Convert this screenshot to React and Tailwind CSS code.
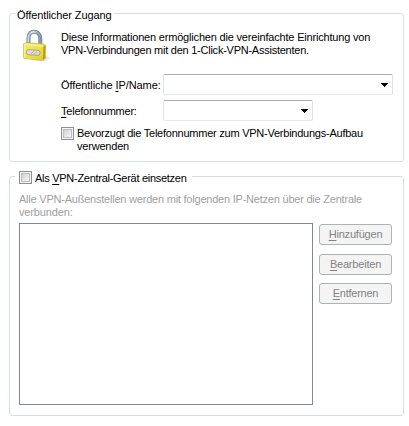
import React from 'react';

function Group({ className, legend, children }) {
  return (
    <section className={'relative w-[395px] rounded-[3px] border border-[#d5dfe8] ' + className}>
      <div className="absolute left-[5px] flex h-[15px] items-center bg-white -top-[8px]">{legend}</div>
      {children}
    </section>
  );
}

function Checkbox() {
  return (
    <span className="block size-[13px] shrink-0 border border-[#8e8f8f] bg-[#f4f4f4] p-[1px]">
      <span className="block size-[9px] border border-[#b9bec4] bg-linear-to-br from-[#cfd3d8] to-[#f6f6f6]" />
    </span>
  );
}

function Combo({ className }) {
  return (
    <div className={'flex h-[21px] items-start justify-end rounded-[2px] border border-[#e2e8ee] border-t-[#abadb3] border-r-[#dbdfe6] border-l-[#e2e3ea] pr-[4px] pt-[8px] ' + className}>
      <svg width="7" height="4" viewBox="0 0 7 4" shapeRendering="crispEdges">
        <path d="M0 0h7v1H6v1H5v1H4v1H3V3H2V2H1V1H0z" fill="#000" />
      </svg>
    </div>
  );
}

function Button({ mnemonic, rest, className }) {
  return (
    <button className={'flex h-[21px] w-[73px] items-center justify-center rounded-[3px] border border-[#adb2b5] bg-[#f4f4f4] text-[#838383] ' + className}>
      <span><u className="underline-offset-2">{mnemonic}</u>{rest}</span>
    </button>
  );
}

function Lock() {
  return (
    <svg className="ml-[12px] mt-[15px] shrink-0" width="30" height="34" viewBox="0 0 30 34">
      <defs>
        <linearGradient id="body" x1="0" y1="0" x2="1" y2="1">
          <stop offset="0" stopColor="#f3ec78" />
          <stop offset=".5" stopColor="#eee04a" />
          <stop offset="1" stopColor="#dec92c" />
        </linearGradient>
        <linearGradient id="steel" x1="0" x2="1">
          <stop offset="0" stopColor="#8fa0ad" />
          <stop offset=".45" stopColor="#c3ced6" />
          <stop offset="1" stopColor="#8597a5" />
        </linearGradient>
        <radialGradient id="shade">
          <stop offset="0" stopColor="#777" stopOpacity=".6" />
          <stop offset="1" stopColor="#999" stopOpacity="0" />
        </radialGradient>
      </defs>
      <ellipse cx="19" cy="29" rx="10" ry="4" fill="url(#shade)" />
      <path d="M6.500 17V9C6.500 4.500 9 2.800 12.300 2.800s6 2.400 6 6.700V18" fill="none" stroke="#71818e" strokeWidth="4" />
      <path d="M6.500 17V9C6.500 4.500 9 2.800 12.300 2.800s6 2.400 6 6.700V18" fill="none" stroke="url(#steel)" strokeWidth="2.600" />
      <path d="M6.200 13V9C6.200 5 9 2.800 12.300 2.800" fill="none" stroke="#edf3f6" strokeWidth="1" />
      <path d="M1.600 14.500L4 13.500l18 1.500 1.700 1.300-.4 13-2.800 2.200L2.200 29.500l-.8-1z" fill="url(#body)" stroke="#b3a230" strokeWidth=".5" />
      <path d="M21.400 17.300l2-1-.4 12.700-2 1.700z" fill="#b39d1c" />
      <path d="M2.500 15.500l18.500 1.600" stroke="#fbf6b4" strokeWidth="1" />
      <path d="M2.700 16V28" stroke="#f8f39b" strokeWidth="1" />
      <rect x="4.500" y="21" width="13.500" height="5" rx="2" transform="rotate(4 11 23)" fill="#dcdddc" stroke="#96926a" strokeWidth=".7" />
      <path d="M9 25l3-3m0 3.300l3-3" stroke="#a2a2a2" strokeWidth=".8" />
    </svg>
  );
}

export default function App() {
  return (
    <main className="flex h-[426px] w-[409px] flex-col gap-[14px] overflow-hidden bg-white pl-[9px] pt-[13px] font-['Liberation_Sans',Arial,sans-serif] text-[11px] leading-[13px] whitespace-nowrap text-black">
      <Group className="h-[149px]" legend={<span className="px-[2px] pt-[3px] tracking-[-0.1px]">Öffentlicher Zugang</span>}>
        <div className="flex h-[60px]">
          <Lock />
          <p className="ml-[9px] mt-[17px]">
            <span className="block tracking-[-0.185px]">Diese Informationen ermöglichen die vereinfachte Einrichtung von</span>
            <span className="block tracking-[-0.245px]">VPN-Verbindungen mit den 1-Click-VPN-Assistenten.</span>
          </p>
        </div>
        <div className="flex h-[21px] items-center pl-[51px]">
          <label className="w-[102px] pt-[2px] tracking-[-0.08px]">Öffentliche <u className="underline-offset-2">I</u>P/Name:</label>
          <Combo className="w-[230px]" />
        </div>
        <div className="mt-[5px] flex h-[21px] items-center pl-[51px]">
          <label className="w-[102px] pt-[2px] tracking-[-0.23px]"><u className="underline-offset-2">T</u>elefonnummer:</label>
          <Combo className="w-[150px]" />
        </div>
        <div className="mt-[6px] flex gap-[3px] pl-[51px]">
          <Checkbox />
          <p>
            <span className="block tracking-[-0.24px]">Bevorzugt die Telefonnummer zum VPN-Verbindungs-Aufbau</span>
            <span className="block tracking-[-0.2px]">verwenden</span>
          </p>
        </div>
      </Group>
      <Group
        className="h-[240px]"
        legend={
          <label className="flex items-center gap-[3px] pl-[4px] pr-[5px] pt-[2px]">
            <Checkbox />
            <span className="relative top-px tracking-[-0.28px]">Als <u className="underline-offset-2">V</u>PN-Zentral-Gerät einsetzen</span>
          </label>
        }
      >
        <p className="ml-[9px] pt-[16px] text-[#a0a0a0]">
          <span className="block tracking-[-0.22px]">Alle VPN-Außenstellen werden mit folgenden IP-Netzen über die Zentrale</span>
          <span className="block tracking-[-0.15px]">verbunden:</span>
        </p>
        <div className="ml-[9px] mt-[4px] flex gap-[6px]">
          <div className="h-[182px] w-[294px] border border-[#828790]" />
          <div className="flex flex-col pt-[1px]">
            <Button mnemonic="H" rest="inzufügen" className="tracking-[-0.2px]" />
            <Button mnemonic="B" rest="earbeiten" className="mt-[9px] tracking-[-0.2px]" />
            <Button mnemonic="E" rest="ntfernen" className="mt-[8px] tracking-[-0.25px]" />
          </div>
        </div>
      </Group>
    </main>
  );
}
